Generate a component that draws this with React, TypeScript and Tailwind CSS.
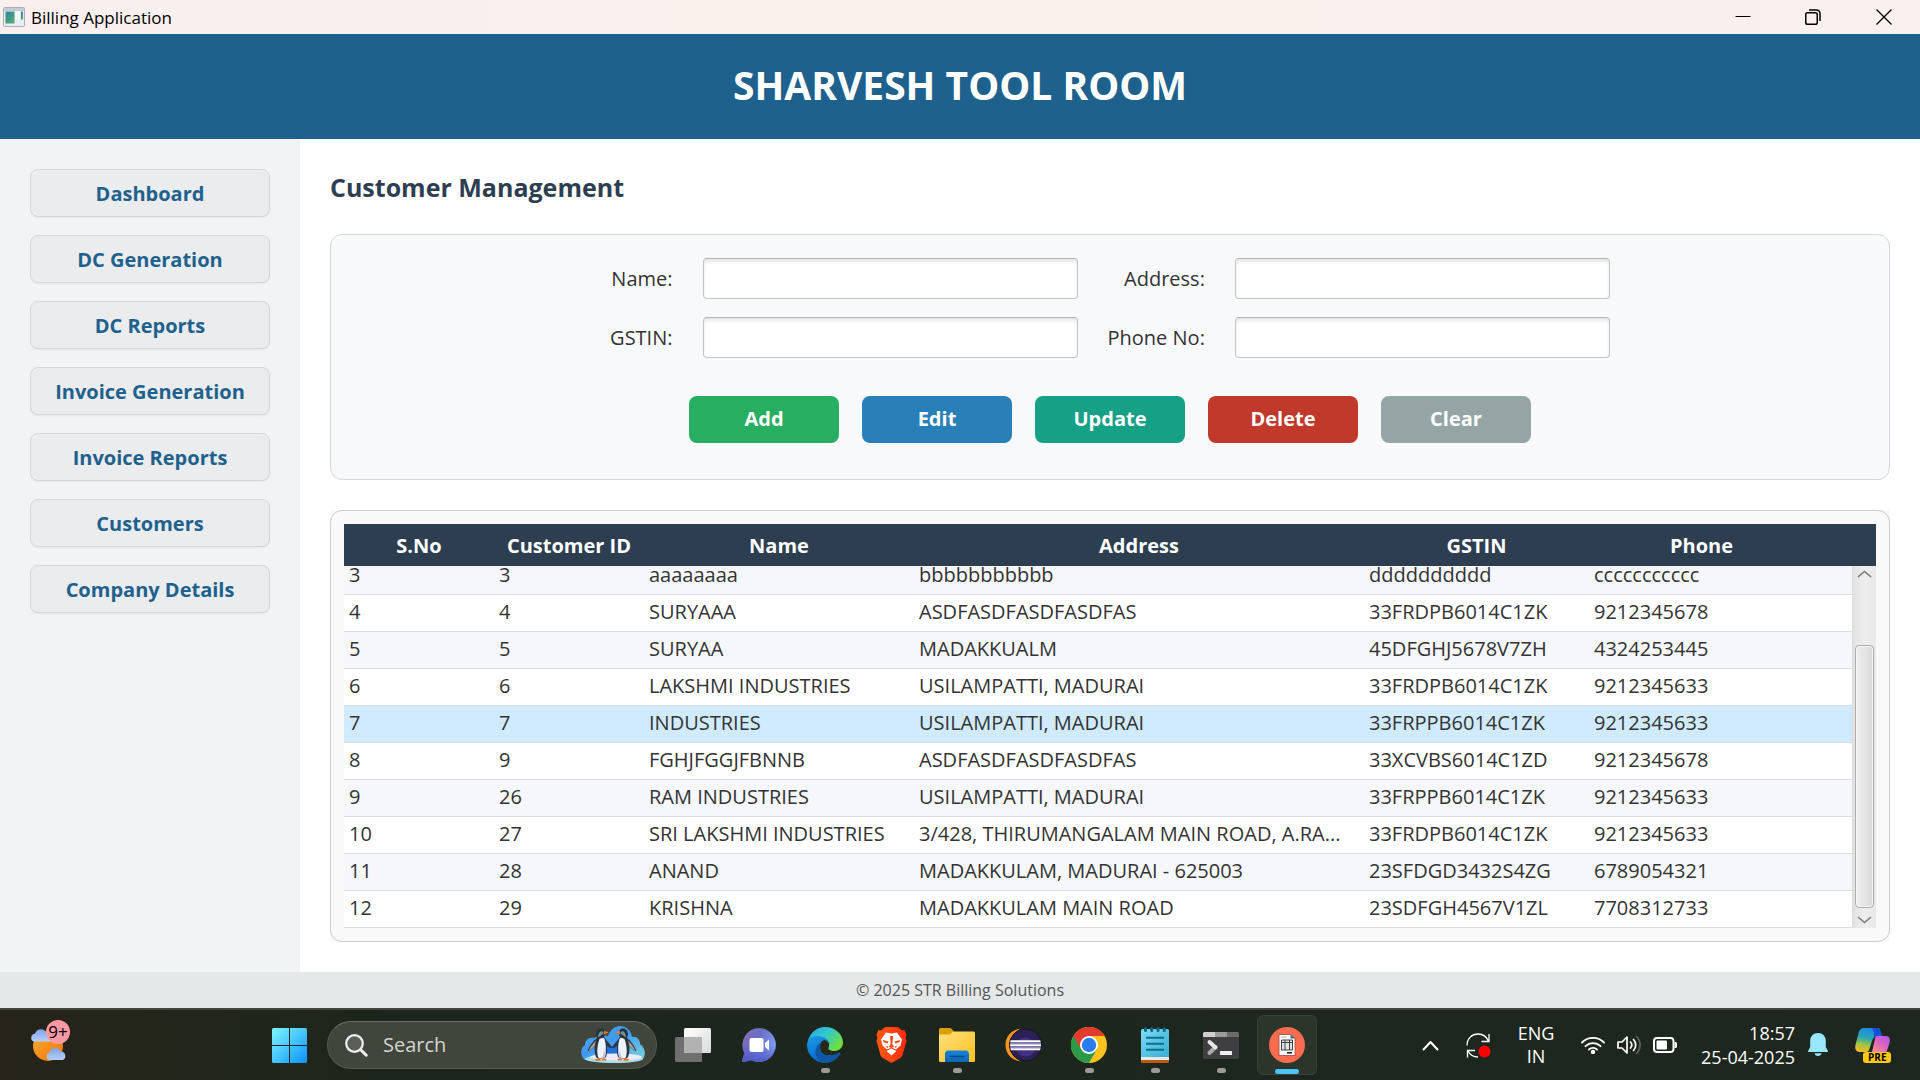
import React from "react";

type Customer = {
  no: number;
  id: number;
  name: string;
  address: string;
  gstin: string;
  phone: string;
};

const customers: Customer[] = [
  { no: 3, id: 3, name: "aaaaaaaa", address: "bbbbbbbbbbb", gstin: "dddddddddd", phone: "ccccccccccc" },
  { no: 4, id: 4, name: "SURYAAA", address: "ASDFASDFASDFASDFAS", gstin: "33FRDPB6014C1ZK", phone: "9212345678" },
  { no: 5, id: 5, name: "SURYAA", address: "MADAKKUALM", gstin: "45DFGHJ5678V7ZH", phone: "4324253445" },
  { no: 6, id: 6, name: "LAKSHMI INDUSTRIES", address: "USILAMPATTI, MADURAI", gstin: "33FRDPB6014C1ZK", phone: "9212345633" },
  { no: 7, id: 7, name: "INDUSTRIES", address: "USILAMPATTI, MADURAI", gstin: "33FRPPB6014C1ZK", phone: "9212345633" },
  { no: 8, id: 9, name: "FGHJFGGJFBNNB", address: "ASDFASDFASDFASDFAS", gstin: "33XCVBS6014C1ZD", phone: "9212345678" },
  { no: 9, id: 26, name: "RAM INDUSTRIES", address: "USILAMPATTI, MADURAI", gstin: "33FRPPB6014C1ZK", phone: "9212345633" },
  { no: 10, id: 27, name: "SRI LAKSHMI INDUSTRIES", address: "3/428, THIRUMANGALAM MAIN ROAD, A.RA...", gstin: "33FRDPB6014C1ZK", phone: "9212345633" },
  { no: 11, id: 28, name: "ANAND", address: "MADAKKULAM, MADURAI - 625003", gstin: "23SFDGD3432S4ZG", phone: "6789054321" },
  { no: 12, id: 29, name: "KRISHNA", address: "MADAKKULAM MAIN ROAD", gstin: "23SDFGH4567V1ZL", phone: "7708312733" },
];

const navItems = [
  "Dashboard",
  "DC Generation",
  "DC Reports",
  "Invoice Generation",
  "Invoice Reports",
  "Customers",
  "Company Details",
];

const actions = [
  { label: "Add", color: "bg-[#27ae60]" },
  { label: "Edit", color: "bg-[#2980b9]" },
  { label: "Update", color: "bg-[#16a085]" },
  { label: "Delete", color: "bg-[#c0392b]" },
  { label: "Clear", color: "bg-[#95a5a6]" },
];

const columns = [
  { label: "S.No", width: "w-[150px]" },
  { label: "Customer ID", width: "w-[150px]" },
  { label: "Name", width: "w-[270px]" },
  { label: "Address", width: "w-[450px]" },
  { label: "GSTIN", width: "w-[225px]" },
  { label: "Phone", width: "w-[225px]" },
];

function TitleBar() {
  return (
    <div className="flex h-[34px] items-center bg-linear-to-r from-[#f9efef] via-[#faf1ec] to-[#f9f0ef] pl-[3px]">
      <svg width="22" height="20" viewBox="0 0 22 20" aria-hidden="true">
        <defs>
          <linearGradient id="appIcon" x1="0" y1="0" x2="1" y2="1">
            <stop offset="0" stopColor="#3a7fae" />
            <stop offset="0.5" stopColor="#3f9a86" />
            <stop offset="1" stopColor="#68b06c" />
          </linearGradient>
        </defs>
        <rect x="0.5" y="0.5" width="21" height="19" rx="1" fill="#e9edf0" stroke="#a9b1b7" />
        <rect x="1" y="1" width="20" height="3" fill="#c3ccd3" />
        <rect x="2.5" y="4.5" width="9" height="12" fill="url(#appIcon)" />
        <rect x="12.5" y="4.5" width="4" height="8" fill="#fbfbfb" />
        <rect x="18" y="4.5" width="2" height="8" fill="url(#appIcon)" />
      </svg>
      <span className="pt-0.5 pl-1.5 text-[17px] leading-6 text-black">Billing Application</span>
      <div className="ml-auto flex h-full">
        <button aria-label="Minimize" className="flex w-[70px] items-center justify-center">
          <svg width="16" height="16" viewBox="0 0 16 16" stroke="#000" fill="none">
            <path d="M0.5 7.5h15" />
          </svg>
        </button>
        <button aria-label="Restore" className="flex w-[70px] items-center justify-center">
          <svg width="16" height="16" viewBox="0 0 16 16" stroke="#000" strokeWidth="1.5" fill="none">
            <rect x="0.75" y="3.75" width="11.5" height="11.5" rx="1.8" />
            <path d="M4 1h7.500a3.500 3.500 0 0 1 3.500 3.500v7.500" />
          </svg>
        </button>
        <button aria-label="Close" className="flex w-[72px] items-center justify-center">
          <svg width="16" height="16" viewBox="0 0 16 16" stroke="#000" strokeWidth="1.3" fill="none">
            <path d="M0.5 0.5l15 15M15.5 0.5l-15 15" />
          </svg>
        </button>
      </div>
    </div>
  );
}

function Sidebar() {
  return (
    <nav className="flex w-[300px] shrink-0 flex-col gap-[18px] bg-[#f1f3f5] px-[30px] py-[30px]">
      {navItems.map((item) => (
        <button
          key={item}
          className="h-12 rounded-lg border border-[#d5d8db] bg-[#eaecee] pt-0.5 text-xl font-bold text-[#1f618d] shadow-xs"
        >
          {item}
        </button>
      ))}
    </nav>
  );
}

function Field({ label, id }: { label: string; id: string }) {
  return (
    <>
      <label htmlFor={id} className="text-right text-xl text-[#333]">
        {label}
      </label>
      <input
        id={id}
        type="text"
        className="h-[41px] w-[375px] rounded-[4px] border border-[#c4c4c4] border-t-[#b4b4b4] bg-white px-2 text-xl shadow-[inset_0_3px_4px_-1px_#e0e0e0] outline-none"
      />
    </>
  );
}

function CustomerForm() {
  return (
    <form
      className="rounded-xl border border-[#d5d8dc] bg-[#f8f9fb] pt-[23px] pb-[36px]"
      onSubmit={(e) => e.preventDefault()}
    >
      <div className="grid grid-cols-[auto_auto_auto_auto] items-center justify-center gap-x-[30px] gap-y-[18px]">
        <Field label="Name:" id="name" />
        <Field label="Address:" id="address" />
        <Field label="GSTIN:" id="gstin" />
        <Field label="Phone No:" id="phone" />
      </div>
      <div className="mt-[38px] flex justify-center gap-[23px]">
        {actions.map((a) => (
          <button
            key={a.label}
            className={`h-[47px] w-[150px] rounded-lg pb-0.5 text-xl font-bold text-white ${a.color}`}
          >
            {a.label}
          </button>
        ))}
      </div>
    </form>
  );
}

function ScrollBar() {
  return (
    <div className="absolute top-[42px] right-0 bottom-0 flex w-6 flex-col items-center border-l border-[#dcdcdc] bg-linear-to-r from-[#e2e2e2] via-[#eeeeee] to-[#e8e8e8]">
      <button aria-label="Scroll up" className="flex h-4 items-center justify-center">
        <svg width="15" height="8" viewBox="0 0 15 8" fill="none" stroke="#7b7b7b" strokeWidth="1.6">
          <path d="M1 7l6.500-5.500L14 7" />
        </svg>
      </button>
      <div className="flex w-full flex-1 flex-col items-center pt-[63px]">
        <div className="w-[19px] flex-1 rounded-[4px] border border-[#adadad] bg-linear-to-r from-[#f0f0f0] to-[#d9d9d9] shadow-[inset_0_0_0_1px_#f7f7f7]" />
      </div>
      <button aria-label="Scroll down" className="flex h-5 items-center justify-center pt-1">
        <svg width="15" height="8" viewBox="0 0 15 8" fill="none" stroke="#7b7b7b" strokeWidth="1.6">
          <path d="M1 1l6.500 5.500L14 1" />
        </svg>
      </button>
    </div>
  );
}

function rowColor(c: Customer) {
  if (c.no === 7) return "bg-[#d0ebff]";
  return c.no % 2 ? "bg-[#f5f7fa]" : "bg-white";
}

function CustomerTable() {
  return (
    <div className="bg-[#f9f9f9]">
      <div className="rounded-xl border border-[#cccccc] p-[13px]">
        <div className="relative">
          <table className="w-full table-fixed border-collapse text-xl text-[#333]">
            <thead className="bg-[#2c3e50] text-white">
              <tr className="h-[42px]">
                {columns.map((c) => (
                  <th key={c.label} className={`p-0 pt-0.5 font-bold ${c.width}`}>
                    {c.label}
                  </th>
                ))}
                <td />
              </tr>
            </thead>
            <tbody>
              {customers.map((c, i) => (
                <tr key={c.no} className={rowColor(c)}>
                  {[c.no, c.id, c.name, c.address, c.gstin, c.phone].map((v, k) => (
                    <td key={k} className="border-b border-[#dcdcdc] p-0">
                      {/* The first row is partly scrolled under the header. */}
                      <div
                        className={
                          i === 0
                            ? "h-7 pl-[5px] leading-[18px] whitespace-nowrap"
                            : "h-9 pl-[5px] leading-[34px] whitespace-nowrap"
                        }
                      >
                        {v}
                      </div>
                    </td>
                  ))}
                  <td className="border-b border-[#dcdcdc] p-0" />
                </tr>
              ))}
            </tbody>
          </table>
          <ScrollBar />
        </div>
      </div>
    </div>
  );
}

function WeatherIcon() {
  return (
    <div className="relative mb-1.5 h-11 w-10">
      <svg className="mt-2" width="38" height="34" viewBox="0 0 38 34" aria-hidden="true">
        <defs>
          <linearGradient id="sun" x1="0" y1="0" x2="1" y2="1">
            <stop offset="0" stopColor="#f6b02c" />
            <stop offset="1" stopColor="#f2700f" />
          </linearGradient>
          <linearGradient id="cloud" x1="0" y1="0" x2="0" y2="1">
            <stop offset="0" stopColor="#7ea4e8" />
            <stop offset="1" stopColor="#b5cff9" />
          </linearGradient>
        </defs>
        <circle cx="18" cy="18" r="15" fill="url(#sun)" />
        <path d="M4 13.500a4 4 0 0 1 1-7.800 6 6 0 0 1 11-1.500 5 5 0 0 1 5 9.300z" fill="url(#cloud)" />
        <path d="M19 32a4 4 0 0 1 .5-7.600 5.800 5.800 0 0 1 11-1 4.600 4.600 0 0 1 2.500 8.600z" fill="url(#cloud)" />
      </svg>
      <span className="absolute top-0 left-4 flex size-6 items-center justify-center rounded-full bg-[#ff99a4] text-[17px] text-black">
        9+
      </span>
    </div>
  );
}

function StartIcon() {
  return (
    <svg width="35" height="35" viewBox="0 0 35 35" aria-hidden="true">
      <defs>
        <linearGradient id="win" gradientUnits="userSpaceOnUse" x1="0" y1="0" x2="35" y2="35">
          <stop offset="0" stopColor="#7df3ff" />
          <stop offset="0.5" stopColor="#47c6fd" />
          <stop offset="1" stopColor="#0a92fb" />
        </linearGradient>
      </defs>
      <g fill="url(#win)">
        <path d="M1.500 0H17v17H0V1.500A1.500 1.500 0 0 1 1.500 0z" />
        <path d="M18 0h15.500A1.500 1.500 0 0 1 35 1.500V17H18z" />
        <path d="M0 18h17v17H1.500A1.500 1.500 0 0 1 0 33.500z" />
        <path d="M18 18h17v15.500a1.500 1.500 0 0 1-1.500 1.500H18z" />
      </g>
    </svg>
  );
}

function Penguin() {
  return (
    <g>
      <path d="M16 12c-4 3-7 7-9.500 13 3.500-.5 7-4 9-8z" fill="#2c3648" />
      <path d="M9 22c2-3 4-6 7-8l-1 4c-2 3-4 5-7 6.500z" fill="#a9a58c" />
      <path d="M23 12c2.500 2 5 5 8.500 9.500-3 1.500-6-1.500-8.500-5z" fill="#2c3648" />
      <path d="M16.500 11c-3 5-4 14-1.500 20 1.500 2.500 8 2.500 10 0 2-6 1-14-1.500-20z" fill="#2a3344" />
      <path d="M19 12c2-1 4-.5 4.500 1 1.800 6 2 13 .5 18-1.500 2-5.500 2-7 0-1.500-6-.5-14 2-19z" fill="#edf1fa" />
      <path d="M24 16c1 5 1 10-.5 15-1 1-2 1.500-3.500 1.500 3-4 4.500-10 4-16.500z" fill="#b9c6e2" />
      <path d="M15 8c0-3.500 2.500-5.500 5-5.500S24.500 4.500 24 8c0 2-1.500 4-4 4.500S15 12 15 8z" fill="#263342" />
      <path d="M17 9.500c1-1.500 1-3.500 2.500-4s3 .5 3 1.500-1 1.500-2 2-2 2-3.500 2z" fill="#6f9494" />
      <path d="M23 4.800l5 1.700-5 2z" fill="#f0762a" />
      <path d="M13.500 33.500l5-1.500 1.500 2.800h-5zM20.500 32.500l5 .3-.5 1.700h-4z" fill="#e8742a" />
    </g>
  );
}

function PenguinsIcon() {
  return (
    <svg width="66" height="38" viewBox="0 0 66 38" aria-hidden="true">
      <defs>
        <linearGradient id="sky" x1="0" y1="0" x2="1" y2="1">
          <stop offset="0" stopColor="#4f9fe0" />
          <stop offset="0.45" stopColor="#3f9af0" />
          <stop offset="1" stopColor="#7ad4dc" />
        </linearGradient>
      </defs>
      <path d="M4 34C-1 30-1 22 4 19c0-4 3-8 9-7 4-2 8-3 14-2 2-6 7-10 12-10 6 0 11 4 12 11 5-1 8 3 8 7 6 4 6 12 2 16z" fill="url(#sky)" />
      <path d="M25 17l7 5 7-5v13H25z" fill="#1f72da" />
      <ellipse cx="33" cy="33" rx="29" ry="4" fill="#a8dfe9" />
      <ellipse cx="35" cy="31" rx="26" ry="3.5" fill="#f2e8f3" />
      <Penguin />
      <g transform="translate(62 0) scale(-1 1)">
        <Penguin />
      </g>
    </svg>
  );
}

function TaskViewIcon() {
  return (
    <svg width="36" height="34" viewBox="0 0 36 34" aria-hidden="true">
      <defs>
        <linearGradient id="tvw" x1="0" y1="0" x2="1" y2="1">
          <stop offset="0" stopColor="#ffffff" />
          <stop offset="1" stopColor="#dadada" />
        </linearGradient>
      </defs>
      <rect x="9" y="0" width="27" height="25" rx="1.5" fill="url(#tvw)" />
      <rect x="0" y="9" width="27" height="25" rx="1.5" fill="#6f6f6f" />
      <path d="M9 9h18v16H9z" fill="#b2b2b2" />
    </svg>
  );
}

function ChatIcon() {
  return (
    <svg width="34" height="36" viewBox="0 0 34 36" aria-hidden="true">
      <defs>
        <linearGradient id="chat" x1="0" y1="0" x2="1" y2="0.5">
          <stop offset="0" stopColor="#8a6ab0" />
          <stop offset="0.5" stopColor="#6a6fc8" />
          <stop offset="1" stopColor="#7e9cf0" />
        </linearGradient>
        <linearGradient id="chatShade" x1="0" y1="0" x2="0" y2="1">
          <stop offset="0.5" stopColor="#5059c9" stopOpacity="0" />
          <stop offset="1" stopColor="#5059c9" />
        </linearGradient>
      </defs>
      <path d="M17 1a17 17 0 1 1-7.500 32.300L1.500 35a1.200 1.200 0 0 1-1.300-1.500L2.300 26A17 17 0 0 1 17 1z" fill="url(#chat)" />
      <path d="M17 1a17 17 0 1 1-7.500 32.300L1.500 35a1.200 1.200 0 0 1-1.300-1.500L2.300 26A17 17 0 0 1 17 1z" fill="url(#chatShade)" />
      <rect x="7.5" y="11" width="14" height="14" rx="2" fill="#fff" />
      <path d="M23 16l4-3.500v11L23 20z" fill="#fff" />
    </svg>
  );
}

function EdgeIcon() {
  return (
    <svg width="36" height="36" viewBox="0 0 36 36" aria-hidden="true">
      <defs>
        <linearGradient id="edgeA" x1="0" y1="0" x2="1" y2="0.6">
          <stop offset="0" stopColor="#2aa7e4" />
          <stop offset="0.5" stopColor="#31c7cf" />
          <stop offset="1" stopColor="#6fe03c" />
        </linearGradient>
        <linearGradient id="edgeB" x1="0" y1="0" x2="0.4" y2="1">
          <stop offset="0" stopColor="#1c9be4" />
          <stop offset="1" stopColor="#0669cf" />
        </linearGradient>
      </defs>
      <path d="M1 14C3 6 9.500 0 18 0c11 0 18 8 18 15.500 0 5-4 8.500-9 8.500-4.500 0-6.500-1.500-5.800-2.800C23.500 17 20.500 13.500 17.500 13z" fill="url(#edgeA)" />
      <path d="M0 18c0-6 5-9 10-9 7 0 13 4 12.700 9-.2-2.500-2.600-4.500-5-4.500-3.500 0-5 3.500-4.500 7.500.7 6 4.500 11 8.800 14.500C10 38 0 29 0 18z" fill="url(#edgeB)" />
      <path d="M13.500 16c-2 6 1.500 12.500 8.500 12 5 0 8.500-1.500 10.500-2.500.8-.3 1.200.4.8 1C30 32.500 24.500 36.500 17 36c-6-1.500-9.500-7.500-8.500-13 .7-3.500 2.500-6 5-7z" fill="#1257a3" />
      <path d="M14.500 15c-1.500 5 1 10 6.500 12 5 1.500 9.500-.5 12.500-2.500-8 1.500-14-2-12-4.500 1.500-2 0-6-3.500-6.500-1.500-.2-2.800.3-3.500 1.500z" fill="#29281b" />
    </svg>
  );
}

function BraveIcon() {
  return (
    <svg width="31" height="36" viewBox="0 0 31 36" aria-hidden="true">
      <defs>
        <linearGradient id="brave" x1="0" y1="0" x2="1" y2="0">
          <stop offset="0" stopColor="#ff5a12" />
          <stop offset="1" stopColor="#fb2a10" />
        </linearGradient>
      </defs>
      <path d="M9 0h13l4 3.500 2.500-.5 2 5-1 3 1 3-4 14c-.5 1.500-1.500 2.500-3 3.500l-8 4.500-8-4.500c-1.500-1-2.500-2-3-3.500L.5 14l1-3-1-3 2-5 2.500.5z" fill="url(#brave)" />
      <path d="M15.500 6.500L21 5.500l5 7-1.500 6-4.500 4-4.500-2-4.500 2-4.500-4-1.500-6 5-7z" fill="#fff" />
      <path d="M15.500 21.500l5 2.500-5 4.500-5-4.500z" fill="#fff" />
      <path d="M7 13l5.500 1.500-1 2-4-1.500zM24 13l-5.500 1.500 1 2 4-1.500zM14 9h3l-.7 8 1.700 3-2.500 1-2.500-1 1.700-3zM9.500 19l3 .5-1 1.500zM21.500 19l-3 .5 1 1.500z" fill="#fb4414" />
    </svg>
  );
}

function FolderIcon() {
  return (
    <svg width="36" height="34" viewBox="0 0 36 34" aria-hidden="true">
      <defs>
        <linearGradient id="folder" x1="0" y1="0" x2="1" y2="1">
          <stop offset="0" stopColor="#ffe07d" />
          <stop offset="1" stopColor="#fcc021" />
        </linearGradient>
        <linearGradient id="folderTab" x1="0" y1="0" x2="0" y2="1">
          <stop offset="0" stopColor="#1683d8" />
          <stop offset="1" stopColor="#0f66b5" />
        </linearGradient>
      </defs>
      <path d="M0 1.500A1.500 1.500 0 0 1 1.500 0h8.500c1 0 2 .4 2.700 1L15 3.500 12 8H0z" fill="#dca006" />
      <path d="M0 6.500h10c2 0 3-3 5-3h19.500A1.500 1.500 0 0 1 36 5v27.500a1.500 1.500 0 0 1-1.500 1.500h-33A1.500 1.500 0 0 1 0 32.500z" fill="url(#folder)" />
      <path d="M6 34v-8a3.500 3.500 0 0 1 3.500-3.500h17A3.500 3.500 0 0 1 30 26v8z" fill="url(#folderTab)" />
      <path d="M11 28.500h14" stroke="#0a4a87" strokeWidth="1.5" strokeLinecap="round" />
    </svg>
  );
}

function EclipseIcon() {
  return (
    <svg width="37" height="34" viewBox="0 0 37 34" aria-hidden="true">
      <defs>
        <clipPath id="planet">
          <circle cx="20.5" cy="17" r="15.5" />
        </clipPath>
      </defs>
      <path d="M16 .5C7 1.500 0.500 8 0.500 17S7 32.500 16 33.500C9 30 4.500 24 4.500 17S9 4 16 .5z" fill="#f7941e" />
      <circle cx="20.5" cy="17" r="16" fill="#2c2255" stroke="#17122f" />
      <g clipPath="url(#planet)">
        <circle cx="20.5" cy="19" r="9.5" fill="#443185" />
        <path d="M0 13.200h40M0 17.200h40M0 21.200h40" stroke="#fff" strokeWidth="2" />
        <path d="M0 15.200h40M0 19.200h40" stroke="#8f86bd" strokeWidth="1.5" />
      </g>
    </svg>
  );
}

function ChromeIcon() {
  return (
    <svg width="36" height="36" viewBox="0 0 36 36" aria-hidden="true">
      <circle cx="18" cy="18" r="18" fill="#fcc31e" />
      <path d="M18 18L2.400 9A18 18 0 0 0 18 36l7.800-13.500z" fill="#2b9b47" />
      <path d="M18 9h15.600A18 18 0 0 0 2.400 9l7.800 13.500z" fill="#e23a2e" />
      <circle cx="18" cy="18" r="9" fill="#fff" />
      <circle cx="18" cy="18" r="7.2" fill="#2b7cee" />
    </svg>
  );
}

function NotepadIcon() {
  return (
    <svg width="28" height="36" viewBox="0 0 28 36" aria-hidden="true">
      <defs>
        <linearGradient id="note" x1="0" y1="0" x2="1" y2="1">
          <stop offset="0" stopColor="#7fdcf4" />
          <stop offset="1" stopColor="#35aed2" />
        </linearGradient>
      </defs>
      <rect x="0" y="26" width="28" height="10" rx="1.5" fill="#bb5a12" />
      <rect x="0" y="24" width="28" height="9" fill="#e8e8e8" />
      <path d="M0 3.500A1.500 1.500 0 0 1 1.500 2h25A1.500 1.500 0 0 1 28 3.500V30H0z" fill="url(#note)" />
      <path d="M4.500 1.500v2M10.700 1.500v2M17 1.500v2M23.300 1.500v2" stroke="#0c6684" strokeWidth="3" strokeLinecap="round" />
      <path d="M5 10.800h18M5 16.800h18M5 22.800h18" stroke="#0c6f90" strokeWidth="2" />
    </svg>
  );
}

function TerminalIcon() {
  return (
    <svg width="36" height="27" viewBox="0 0 36 27" aria-hidden="true">
      <rect width="36" height="27" rx="1.5" fill="#3f3f41" />
      <path d="M1.500 0H12v5H0V1.500A1.500 1.500 0 0 1 1.500 0z" fill="#cfcfcf" />
      <path d="M12 0h12v5H12z" fill="#9a9a9a" />
      <path d="M24 0h10.500A1.500 1.500 0 0 1 36 1.500V5H24z" fill="#6c6c6c" />
      <path d="M6.500 21l6-6" stroke="#a9a9a9" strokeWidth="4" strokeLinecap="round" />
      <path d="M6.500 10l6 5.500" stroke="#e6e6e6" strokeWidth="4" strokeLinecap="round" />
      <rect x="17" y="19" width="12" height="4" rx="0.5" fill="#efefef" />
    </svg>
  );
}

function BillingIcon() {
  return (
    <svg width="36" height="36" viewBox="0 0 36 36" aria-hidden="true">
      <circle cx="18" cy="18" r="18" fill="#fb6b50" />
      <path d="M10 7.500h12l4 4v17H10z" fill="#fff" stroke="#9b4a3a" strokeWidth="0.8" />
      <path d="M21.500 7.500l4.500 4h-4.500z" fill="#2d6f80" />
      <path d="M12.500 13h11v10h-11z" fill="#e3e5e0" />
      <path d="M12.500 13h11v10h-11zM12.500 15.500h11M16 13v10M20.500 13v10" fill="none" stroke="#3b4045" />
      <path d="M12 10h6" stroke="#b9b9b9" />
      <path d="M18 25.800h5" stroke="#222" strokeWidth="1.6" />
    </svg>
  );
}

const taskApps: { name: string; icon: React.ReactNode; running?: boolean; active?: boolean }[] = [
  { name: "Task View", icon: <TaskViewIcon /> },
  { name: "Chat", icon: <ChatIcon /> },
  { name: "Edge", icon: <EdgeIcon />, running: true },
  { name: "Brave", icon: <BraveIcon /> },
  { name: "File Explorer", icon: <FolderIcon />, running: true },
  { name: "Eclipse", icon: <EclipseIcon /> },
  { name: "Chrome", icon: <ChromeIcon />, running: true },
  { name: "Notepad", icon: <NotepadIcon />, running: true },
  { name: "Terminal", icon: <TerminalIcon />, running: true },
  { name: "Billing Application", icon: <BillingIcon />, active: true },
];

function CopilotIcon() {
  return (
    <div className="relative size-9">
      <svg width="35" height="35" viewBox="0 0 35 35" aria-hidden="true">
        <defs>
          <linearGradient id="coA" x1="0.4" y1="0" x2="0.2" y2="1">
            <stop offset="0" stopColor="#1a8ce6" />
            <stop offset="0.4" stopColor="#2ba6b4" />
            <stop offset="0.7" stopColor="#a9c63c" />
            <stop offset="1" stopColor="#f6b52a" />
          </linearGradient>
          <linearGradient id="coB" x1="1" y1="0" x2="0.2" y2="1">
            <stop offset="0" stopColor="#a05cf0" />
            <stop offset="0.5" stopColor="#dd62c4" />
            <stop offset="1" stopColor="#f58a8c" />
          </linearGradient>
        </defs>
        <path d="M9 1h13c3 0 3 2 4 5l1 3h-4c-3 0-5 1.500-6 5l-3 9c-.5 1.500-1.500 2-3 2H4c-3 0-4.500-3-3.500-7l3-12C4.500 2.500 6 1 9 1z" fill="url(#coA)" />
        <path d="M16 1h6c3 0 3 2 4 5l1 3h-4c-2 0-3 .7-4 2C19 6 18.500 2 16 1z" fill="#1650d8" />
        <path d="M22 9h9c3.500 0 4.500 3 3.500 7l-3 9H17l3-13c.5-2 1-3 2-3z" fill="url(#coB)" />
      </svg>
      <span className="absolute bottom-0 left-2 rounded-[3px] bg-[#ffc90e] px-[5px] text-[10px] leading-[11px] font-bold text-black">
        PRE
      </span>
    </div>
  );
}

function TaskBar() {
  return (
    <div className="flex h-[72px] items-center border-t-2 border-[#43463d] bg-linear-to-r from-[#26241a] from-0% via-[#1d261c] via-20% to-[#1e271f] to-100% text-white">
      <div className="flex w-64 pl-[30px]">
        <WeatherIcon />
      </div>
      <button aria-label="Start" className="flex w-[66px] justify-center">
        <StartIcon />
      </button>
      <div className="ml-[5px] flex h-12 w-[330px] items-center rounded-full border border-[#555a4f] border-t-[#6a6e64] bg-[#40463c] pr-[9px] pl-[17px]">
        <svg width="23" height="23" viewBox="0 0 23 23" fill="none" stroke="#eeeef4" strokeLinecap="round" aria-hidden="true">
          <circle cx="9.5" cy="9.5" r="8.3" strokeWidth="2.2" fill="#5b5f57" />
          <path d="M15.700 15.700l5.500 5.500" strokeWidth="3" />
        </svg>
        <input
          type="text"
          aria-label="Search"
          placeholder="Search"
          className="min-w-0 flex-1 bg-transparent pl-[15px] text-xl text-white outline-none placeholder:text-[#d3d5d0]"
        />
        <PenguinsIcon />
      </div>
      <div className="ml-[3px] flex">
        {taskApps.map((app) => (
          <button key={app.name} aria-label={app.name} className="flex h-[60px] w-[66px] justify-center">
            <span
              className={
                app.active
                  ? "relative flex size-[60px] items-center justify-center rounded-md border border-[#3a4237] bg-[#2c352a]"
                  : "relative flex size-[60px] items-center justify-center"
              }
            >
              {app.icon}
              {app.running && <span className="absolute bottom-0.5 h-[5px] w-[9px] rounded-full bg-[#9b9c95]" />}
              {app.active && <span className="absolute bottom-0 h-[5px] w-6 rounded-full bg-[#4cc2ff]" />}
            </span>
          </button>
        ))}
      </div>
      <div className="ml-auto flex items-center pr-[29px]">
        <button aria-label="Show hidden icons">
          <svg width="17" height="11" viewBox="0 0 17 11" fill="none" stroke="#fff" strokeWidth="2" strokeLinecap="round" strokeLinejoin="round">
            <path d="M1.500 9.500l7-7.500 7 7.500" />
          </svg>
        </button>
        <svg className="ml-[27px]" width="25" height="25" viewBox="0 0 25 25" fill="none" stroke="#fff" strokeWidth="1.3" aria-hidden="true">
          <path d="M1 12.500C1 5.500 6 1 12 1c4.500 0 8.500 2.500 10.500 7M23 1v7.500h-7.500M1.500 24.500v-7H9M2 18c2 4 5.500 6 10 6" />
          <circle cx="18.5" cy="18.5" r="6" fill="#fe0000" stroke="none" />
        </svg>
        <div className="w-[90px] text-center text-lg leading-[23px]">
          ENG
          <br />
          IN
        </div>
        <svg width="24" height="18" viewBox="0 0 24 18" fill="none" stroke="#fff" strokeWidth="1.8" strokeLinecap="round" aria-hidden="true">
          <path d="M1 6.500a15.500 15.500 0 0 1 22 0M4.500 10.200a10.500 10.500 0 0 1 15 0M8 13.500a5.700 5.700 0 0 1 8 0" />
          <circle cx="12" cy="16" r="1.3" fill="#fff" />
        </svg>
        <svg className="ml-3" width="24" height="20" viewBox="0 0 24 20" fill="none" stroke="#fff" strokeWidth="1.7" strokeLinecap="round" strokeLinejoin="round" aria-hidden="true">
          <path d="M1 7v6h4l5 5V2L5 7zM13.500 7a4.500 4.500 0 0 1 0 6M16.500 4.500a8 8 0 0 1 0 11" />
          <path d="M19.500 1.500a12 12 0 0 1 0 17" stroke="#5c635a" />
        </svg>
        <svg className="ml-3" width="24" height="16" viewBox="0 0 24 16" aria-hidden="true">
          <rect x="1" y="1" width="19.5" height="14" rx="3" fill="none" stroke="#fff" strokeWidth="2" />
          <rect x="3.5" y="3.5" width="10.5" height="9" rx="1" fill="#fff" />
          <path d="M21.500 5h1a1.500 1.500 0 0 1 1.500 1.500v3a1.500 1.500 0 0 1-1.500 1.500h-1z" fill="#fff" />
        </svg>
        <div className="ml-6 text-right text-lg leading-6">
          18:57
          <br />
          25-04-2025
        </div>
        <svg className="ml-[13px]" width="20" height="24" viewBox="0 0 20 24" fill="#98e6ff" aria-hidden="true">
          <path d="M10 0c4.700 0 7.800 3.500 7.800 8v6l2.100 4c.3.600 0 1-.6 1H.7c-.6 0-.9-.4-.6-1l2.100-4V8C2.200 3.500 5.300 0 10 0zM6.500 20.200h7c-.3 1.700-1.700 2.800-3.500 2.800s-3.200-1.100-3.500-2.800z" />
        </svg>
        <div className="ml-[27px]">
          <CopilotIcon />
        </div>
      </div>
    </div>
  );
}

export default function App() {
  return (
    <div className="flex min-h-screen flex-col bg-white font-['Open_Sans',sans-serif]">
      <TitleBar />
      <header className="flex h-[105px] items-center justify-center bg-[#1f618d] pb-0.5">
        <h1 className="text-[39px] font-bold text-white">SHARVESH TOOL ROOM</h1>
      </header>
      <div className="flex flex-1">
        <Sidebar />
        <main className="flex min-w-0 flex-1 flex-col p-[30px]">
          <h2 className="mb-[29px] text-[25px] leading-9 font-bold text-[#2c3e50]">Customer Management</h2>
          <CustomerForm />
          <div className="mt-[30px]">
            <CustomerTable />
          </div>
        </main>
      </div>
      <footer className="flex h-9 items-center justify-center bg-[#e5e8e8] text-base text-[#555]">
        © 2025 STR Billing Solutions
      </footer>
      <TaskBar />
    </div>
  );
}
